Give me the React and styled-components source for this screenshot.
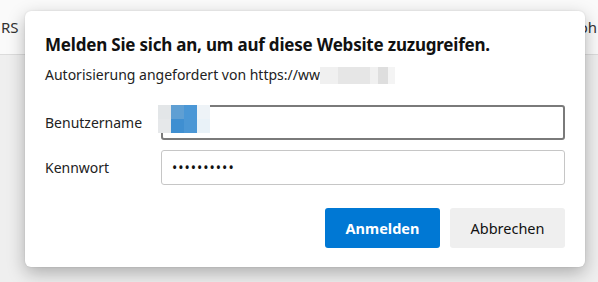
import React from 'react';
import styled, { createGlobalStyle } from 'styled-components';

const GlobalStyle = createGlobalStyle`
  html, body {
    margin: 0;
    padding: 0;
    width: 598px;
    height: 282px;
    overflow: hidden;
    background: #f0f0f0;
    font-family: "Noto Sans", "Open Sans", sans-serif;
  }
`;

const Page = styled.div`
  position: relative;
  width: 598px;
  height: 282px;
  background: #efefef;
`;

const TopBar = styled.div`
  height: 54px;
  display: flex;
  justify-content: space-between;
  align-items: center;
  background: #fafafa;
  border-bottom: 1px solid #dcdcdc;
  overflow: hidden;
  font-size: 15px;
  color: #333;
`;

const BarItem = styled.span`
  padding: 0 1px;
`;

const Dialog = styled.div`
  position: absolute;
  left: 25px;
  top: 11px;
  width: 560px;
  box-sizing: border-box;
  padding: 22px 20px 19px 20px;
  background: #fff;
  border-radius: 6px;
  box-shadow: 0 6px 18px rgba(0, 0, 0, 0.28), 0 0 2px rgba(0, 0, 0, 0.12);
`;

const Title = styled.h1`
  margin: 0;
  font-size: 17px;
  line-height: 24px;
  font-weight: 700;
  letter-spacing: -0.2px;
  color: #111;
`;

const Subtitle = styled.div`
  margin-top: 8px;
  font-size: 14px;
  line-height: 20px;
  color: #222;
  display: flex;
  align-items: center;
`;

const Redacted = styled.span`
  display: inline-block;
  width: 75px;
  height: 17px;
  background: linear-gradient(90deg, #f0f0f0 0 18px, #e6e6e6 18px 50px, #f0f0f0 50px 58px, #dedede 58px 68px, #f4f4f4 68px);
`;

const Form = styled.div`
  margin-top: 20px;
  display: grid;
  grid-template-columns: 116px 1fr;
  row-gap: 10px;
  align-items: center;
`;

const Label = styled.label`
  font-size: 14px;
  color: #222;
`;

const Field = styled.div`
  position: relative;
  height: 35px;
  box-sizing: border-box;
  border: ${p => (p.focused ? '2px solid #7a7a7a' : '1px solid #c6c6c6')};
  border-radius: 3px;
  display: flex;
  align-items: center;
  padding-left: 10px;
  font-size: 14px;
  letter-spacing: 1px;
  color: #111;
`;

const Pixels = styled.div`
  position: absolute;
  left: -5px;
  top: -2px;
  width: 52px;
  height: 28px;
  display: grid;
  grid-template-columns: repeat(4, 13px);
  grid-template-rows: repeat(2, 14px);
`;

const Pixel = styled.span`
  background: ${p => p.c};
`;

const Actions = styled.div`
  margin-top: 23px;
  display: flex;
  justify-content: flex-end;
  gap: 10px;
`;

const Button = styled.button`
  width: 115px;
  height: 40px;
  border: none;
  border-radius: 3px;
  font-family: inherit;
  font-size: 14.5px;
  font-weight: ${p => (p.primary ? 700 : 400)};
  background: ${p => (p.primary ? '#0078d4' : '#efefef')};
  color: ${p => (p.primary ? '#fff' : '#111')};
`;

const pixelColors = [
  '#e3e6e8', '#5f9fd3', '#4a97d6', '#eef3f7',
  '#e6e8ea', '#3f8fd1', '#4b97d5', '#e9f2f8',
];

export default function App() {
  return (
    <Page>
      <GlobalStyle />
      <TopBar>
        <BarItem>RS</BarItem>
        <BarItem>oh</BarItem>
      </TopBar>
      <Dialog>
        <Title>Melden Sie sich an, um auf diese Website zuzugreifen.</Title>
        <Subtitle>
          Autorisierung angefordert von https://ww<Redacted />
        </Subtitle>
        <Form>
          <Label>Benutzername</Label>
          <Field focused>
            <Pixels>
              {pixelColors.map((c, i) => <Pixel key={i} c={c} />)}
            </Pixels>
          </Field>
          <Label>Kennwort</Label>
          <Field>••••••••••</Field>
        </Form>
        <Actions>
          <Button primary>Anmelden</Button>
          <Button>Abbrechen</Button>
        </Actions>
      </Dialog>
    </Page>
  );
}
